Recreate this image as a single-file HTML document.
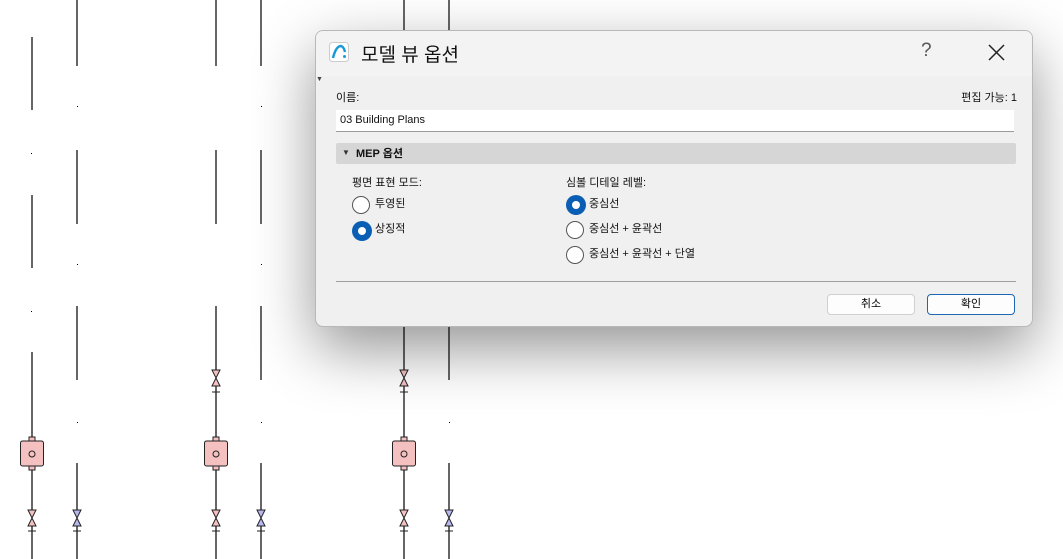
<!DOCTYPE html>
<html><head><meta charset="utf-8"><style>
body{margin:0;width:1063px;height:559px;overflow:hidden;background:#fff;position:relative;font-family:"Liberation Sans","Noto Sans CJK KR",sans-serif;}
svg.bg{position:absolute;left:0;top:0}
.dlg{position:absolute;left:315px;top:30px;width:716px;height:295px;background:#f0f0f0;border:1px solid #b8b8b8;border-radius:8px;box-shadow:0 22px 60px rgba(0,0,0,.42);overflow:hidden}
.t{position:absolute;white-space:nowrap;color:#111}
.title{font-size:19px;left:45px;top:9px;color:#111}
.rb{position:absolute;width:16px;height:16px;border:1.5px solid #555;border-radius:50%;background:#fff}
.rb.on{border:none;width:20px;height:20px;background:#0a5fb4}
.rb.on::after{content:"";position:absolute;left:6px;top:6px;width:8px;height:8px;border-radius:50%;background:#fff}
.f{font-size:11px}
.btn{position:absolute;top:263px;width:86px;height:19px;background:#fdfdfd;border:1px solid #cfcfcf;border-radius:4px;font-size:11px;text-align:center;line-height:19px}
</style></head><body>
<svg class="bg" width="1063" height="559">
<g stroke="#000" stroke-width="1.2">
<line x1="32" y1="37" x2="32" y2="110"/><line x1="32" y1="195" x2="32" y2="268"/><line x1="32" y1="352" x2="32" y2="440"/><line x1="32" y1="467" x2="32" y2="510"/><line x1="32" y1="526" x2="32" y2="559"/>
<line x1="77" y1="0" x2="77" y2="66"/><line x1="77" y1="150" x2="77" y2="224"/><line x1="77" y1="306" x2="77" y2="380"/><line x1="77" y1="463" x2="77" y2="510"/><line x1="77" y1="526" x2="77" y2="559"/>
<line x1="216" y1="0" x2="216" y2="66"/><line x1="216" y1="150" x2="216" y2="224"/><line x1="216" y1="306" x2="216" y2="370"/><line x1="216" y1="386" x2="216" y2="440"/><line x1="216" y1="467" x2="216" y2="510"/><line x1="216" y1="526" x2="216" y2="559"/>
<line x1="261" y1="0" x2="261" y2="66"/><line x1="261" y1="150" x2="261" y2="224"/><line x1="261" y1="306" x2="261" y2="380"/><line x1="261" y1="463" x2="261" y2="510"/><line x1="261" y1="526" x2="261" y2="559"/>
<line x1="404" y1="0" x2="404" y2="30"/><line x1="404" y1="320" x2="404" y2="370"/><line x1="404" y1="386" x2="404" y2="440"/><line x1="404" y1="467" x2="404" y2="510"/><line x1="404" y1="526" x2="404" y2="559"/>
<line x1="449" y1="0" x2="449" y2="30"/><line x1="449" y1="320" x2="449" y2="380"/><line x1="449" y1="463" x2="449" y2="510"/><line x1="449" y1="526" x2="449" y2="559"/>
</g>
<g fill="#000"><rect x="31" y="153" width="1" height="1"/><rect x="31" y="311" width="1" height="1"/><rect x="77" y="106" width="1" height="1"/><rect x="77" y="264" width="1" height="1"/><rect x="77" y="422" width="1" height="1"/><rect x="261" y="106" width="1" height="1"/><rect x="261" y="264" width="1" height="1"/><rect x="261" y="422" width="1" height="1"/><rect x="449" y="422" width="1" height="1"/></g>
<g stroke="#222" stroke-width="1">
<g fill="#f4c0c0">
<path d="M28 510H36L28 526H36Z"/><path d="M212 510H220L212 526H220Z"/><path d="M400 510H408L400 526H408Z"/>
<path d="M212 370H220L212 386H220Z"/><path d="M400 370H408L400 386H408Z"/>
<rect x="29" y="437" width="6" height="4"/><rect x="29" y="466" width="6" height="4"/><rect x="20.5" y="441" width="23" height="25" rx="2"/>
<rect x="213" y="437" width="6" height="4"/><rect x="213" y="466" width="6" height="4"/><rect x="204.5" y="441" width="23" height="25" rx="2"/>
<rect x="401" y="437" width="6" height="4"/><rect x="401" y="466" width="6" height="4"/><rect x="392.5" y="441" width="23" height="25" rx="2"/>
</g>
<g fill="#b8b8f0"><path d="M73 510H81L73 526H81Z"/><path d="M257 510H265L257 526H265Z"/><path d="M445 510H453L445 526H453Z"/></g>
<g fill="none"><circle cx="32" cy="454" r="3"/><circle cx="216" cy="454" r="3"/><circle cx="404" cy="454" r="3"/>
<path d="M28 531H36M73 531H81M212 531H220M257 531H265M400 531H408M445 531H453M212 392H220M400 392H408"/></g>
</g>
</svg>
<div class="dlg">
<div style="position:absolute;left:0;top:0;width:716px;height:45px;background:#f3f3f3"></div>
<svg style="position:absolute;left:13px;top:11px" width="20" height="20"><rect x="0.5" y="0.5" width="19" height="19" rx="3" fill="#fff" stroke="#ccc"/><path d="M4 16 Q7 4 12 4 Q15 5 16 10" fill="none" stroke="#1a9bd7" stroke-width="2.5"/><circle cx="15.5" cy="14.5" r="1.5" fill="#1a9bd7"/></svg>
<div class="t title">모델 뷰 옵션</div>
<div class="t" style="left:605px;top:9px;font-size:19px;color:#555;font-weight:300">?</div>
<svg style="position:absolute;left:672px;top:13px" width="17" height="17"><path d="M1 1L16 16M16 1L1 16" stroke="#222" stroke-width="1.5"/></svg>
<div class="t" style="left:0;top:45px;font-size:7px;color:#444">▼</div>
<div class="t f" style="left:20px;top:58px">이름:</div>
<div class="t f" style="right:15px;top:58px">편집 가능: 1</div>
<div style="position:absolute;left:20px;top:79px;width:678px;height:21px;background:#fff;border-bottom:1px solid #999"></div>
<div class="t f" style="left:24px;top:83px">03 Building Plans</div>
<div style="position:absolute;left:20px;top:112px;width:680px;height:21px;background:#d6d6d6;border-radius:2px"></div>
<div class="t" style="left:26px;top:117px;font-size:8px;color:#333">▼</div>
<div class="t f" style="left:40px;top:114px;font-weight:bold">MEP 옵션</div>
<div class="t f" style="left:36px;top:143px">평면 표현 모드:</div>
<div class="rb" style="left:36px;top:165px"></div><div class="t f" style="left:59px;top:164px">투영된</div>
<div class="rb on" style="left:36px;top:190px"></div><div class="t f" style="left:59px;top:189px">상징적</div>
<div class="t f" style="left:250px;top:143px">심볼 디테일 레벨:</div>
<div class="rb on" style="left:250px;top:164px"></div><div class="t f" style="left:273px;top:164px">중심선</div>
<div class="rb" style="left:250px;top:190px"></div><div class="t f" style="left:273px;top:189px">중심선 + 윤곽선</div>
<div class="rb" style="left:250px;top:215px"></div><div class="t f" style="left:273px;top:214px">중심선 + 윤곽선 + 단열</div>
<div style="position:absolute;left:20px;top:250px;width:680px;height:1px;background:#a0a0a0"></div>
<div class="btn" style="left:511px">취소</div>
<div class="btn" style="left:611px;border-color:#1d66b5">확인</div>
</div>
</body></html>
